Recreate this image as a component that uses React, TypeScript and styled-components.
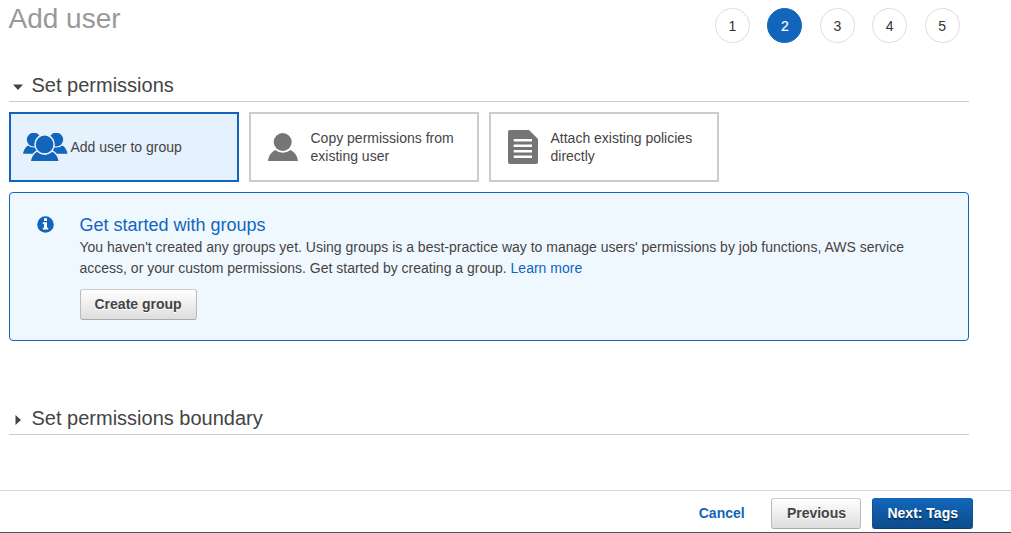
import React from "react";
import styled, { createGlobalStyle, css } from "styled-components";

const GlobalStyle = createGlobalStyle`
  *, *::before, *::after { box-sizing: border-box; }
  body {
    margin: 0;
    background: #fff;
    color: #444;
    font: 14px/21px "Liberation Sans", Arial, sans-serif;
    overflow: hidden;
  }
`;

const Page = styled.div`
  display: flex;
  flex-direction: column;
  height: 533px;
  border-bottom: 1px solid #4b5264;
`;

const Content = styled.main`
  flex: 1;
  width: 969px;
  padding-left: 9px;
`;

const Header = styled.header`
  display: flex;
  justify-content: space-between;
  height: 70px;
`;

const Title = styled.h1`
  margin: 2px 0 0 -0.5px;
  font-size: 28px;
  line-height: 34px;
  font-weight: normal;
  color: #999;
`;

const Steps = styled.ol`
  display: flex;
  gap: 17.4px;
  margin: 8px 9.45px 0 0;
  padding: 0;
  list-style: none;
`;

const Step = styled.li<{ $current?: boolean }>`
  display: flex;
  align-items: center;
  justify-content: center;
  width: 35px;
  height: 35px;
  padding-top: 1px;
  border: 1px solid #ddd;
  border-radius: 50%;
  color: #333;
  ${(p) => p.$current && css`
    border-color: #1166bb;
    background: #1166bb;
    color: #fff;
    -webkit-text-stroke: 0.2px #fff;
  `}
`;

const SectionHeading = styled.h2`
  display: flex;
  align-items: center;
  height: 32px;
  margin: 0;
  padding: 0 0 0 4px;
  border-bottom: 1px solid #ccc;
  font-size: 20px;
  font-weight: normal;
  line-height: 29px;
`;

const Caret = styled.svg`
  width: 10px;
  height: 10px;
  margin: 3px 8.5px 0 0;
  fill: #444;
`;

const Options = styled.div`
  display: flex;
  gap: 10px;
  margin: 10px 0;
`;

const Option = styled.div<{ $selected?: boolean }>`
  display: flex;
  align-items: center;
  width: 230px;
  height: 70px;
  padding-left: 12px;
  border: 2px solid ${(p) => (p.$selected ? "#1166bb" : "#ccc")};
  background: ${(p) => (p.$selected ? "#e5f1fd" : "#fff")};
  color: ${(p) => (p.$selected ? "#1166bb" : "#757575")};
`;

const OptionIcon = styled.div<{ $indent: number }>`
  width: 45px;
  margin-right: 2.5px;
  padding-left: ${(p) => p.$indent}px;
  svg { display: block; fill: currentColor; }
`;

const OptionLabel = styled.span`
  width: 155px;
  line-height: 18px;
  color: #444;
`;

const Notice = styled.section`
  display: flex;
  height: 149px;
  padding: 22px 27.5px;
  border: 1px solid #1166bb;
  border-radius: 4px;
  background: #f0f8ff;
`;

const InfoIcon = styled.svg`
  flex: none;
  width: 17px;
  height: 17px;
  margin: 0.5px 25.5px 0 -0.5px;
`;

const NoticeTitle = styled.h3`
  margin: 0;
  font-size: 18px;
  line-height: 21px;
  font-weight: normal;
  color: #1166bb;
`;

const NoticeText = styled.p`
  width: 850px;
  margin: 1px 0 10px;
`;

const Link = styled.a<{ $strong?: boolean }>`
  color: #1166bb;
  text-decoration: none;
  font-weight: ${(p) => (p.$strong ? "bold" : "normal")};
`;

const Button = styled.button<{ $primary?: boolean }>`
  height: 31px;
  padding: 0 14px 1px;
  border: 1px solid;
  border-color: #ccc #bbb #aaa;
  border-radius: 3px;
  background: linear-gradient(#fff, #ddd);
  color: #444;
  font: bold 14px/21px "Liberation Sans", Arial, sans-serif;
  text-shadow: 0 1px 0 #fff;
  ${(p) => p.$primary && css`
    border-color: #1166bb #0d5398 #0a3f78;
    background: linear-gradient(#1166bb, #0d4c8b);
    color: #fff;
    text-shadow: 0 2px 1px #083260;
  `}
`;

const Boundary = styled.section`
  margin-top: 62px;
`;

const Footer = styled.footer`
  display: flex;
  align-items: center;
  justify-content: flex-end;
  height: 42px;
  padding: 4px 38px 0 0;
  border-top: 1px solid #d5d5d5;
`;

const Actions = styled.div`
  display: flex;
  align-items: center;
  gap: 11px;
  margin: 0 0 0 26.8px;
  ${Button}:first-child { width: 90px; }
`;

const GroupIcon = () => (
  <svg width="45" height="28" viewBox="0 0 45 28">
    <circle cx="10.8" cy="6.6" r="7" />
    <circle cx="33.2" cy="6.6" r="7" />
    <path d="M0 20.8C.5 17 2.6 13.6 5.2 12.4Q8 15 13 14.2L17 20.8Z" />
    <path d="M44.5 20.8C44 17 41.9 13.6 39.3 12.4Q36.5 15 31.5 14.2L27.5 20.8Z" />
    <g stroke="#e5f1fd" strokeWidth="1.5">
      <path d="M7 30C7.3 24.5 10.3 20.2 14 17.9Q21.7 24 29.4 17.9C33.2 20.2 36.2 24.5 36.5 30Z" />
      <circle cx="21.6" cy="11.4" r="9.6" />
    </g>
  </svg>
);

const UserIcon = () => (
  <svg width="30" height="28" viewBox="0 0 30 28">
    <circle cx="14.7" cy="9" r="9" />
    <path d="M0 28C.4 23.4 3.2 19 7.2 16.9Q14.7 22.6 22.6 16.9C26.8 19 29.6 23.4 30 28Z" />
  </svg>
);

const DocumentIcon = () => (
  <svg width="30" height="34" viewBox="0 0 30 34">
    <path d="M2 0H21L30 9V32Q30 34 28 34H2Q0 34 0 32V2Q0 0 2 0Z" />
    <path d="M5.7 10.2H24M5.7 15.7H24M5.7 21.2H24M5.7 26.7H24" stroke="#fff" strokeWidth="2.6" />
  </svg>
);

const options = [
  { label: "Add user to group", icon: <GroupIcon />, indent: 0, selected: true },
  { label: "Copy permissions from existing user", icon: <UserIcon />, indent: 5 },
  { label: "Attach existing policies directly", icon: <DocumentIcon />, indent: 5 },
];

export default function App() {
  return (
    <>
      <GlobalStyle />
      <Page>
        <Content>
          <Header>
            <Title>Add user</Title>
            <Steps>
              {[1, 2, 3, 4, 5].map((n) => (
                <Step key={n} $current={n === 2}>{n}</Step>
              ))}
            </Steps>
          </Header>
          <SectionHeading>
            <Caret viewBox="0 0 10 10"><path d="M0 2.5H10L5 8Z" /></Caret>
            Set permissions
          </SectionHeading>
          <Options>
            {options.map((o) => (
              <Option key={o.label} $selected={o.selected}>
                <OptionIcon $indent={o.indent}>{o.icon}</OptionIcon>
                <OptionLabel>{o.label}</OptionLabel>
              </Option>
            ))}
          </Options>
          <Notice>
            <InfoIcon viewBox="0 0 17 17">
              <circle cx="8.5" cy="8.5" r="8.3" fill="#1166bb" />
              <path d="M7 2.3H10V5H7ZM5.8 6.3H10V11.8H11.2V13.6H5.8V11.8H7V8.1H5.8Z" fill="#fff" />
            </InfoIcon>
            <div>
              <NoticeTitle>Get started with groups</NoticeTitle>
              <NoticeText>
                You haven't created any groups yet. Using groups is a best-practice way to manage users' permissions by job functions, AWS service access, or your custom permissions. Get started by creating a group. <Link>Learn more</Link>
              </NoticeText>
              <Button>Create group</Button>
            </div>
          </Notice>
          <Boundary>
            <SectionHeading>
              <Caret viewBox="0 0 10 10"><path d="M2.5 0L8 5L2.5 10Z" /></Caret>
              Set permissions boundary
            </SectionHeading>
          </Boundary>
        </Content>
        <Footer>
          <Link $strong>Cancel</Link>
          <Actions>
            <Button>Previous</Button>
            <Button $primary>Next: Tags</Button>
          </Actions>
        </Footer>
      </Page>
    </>
  );
}
